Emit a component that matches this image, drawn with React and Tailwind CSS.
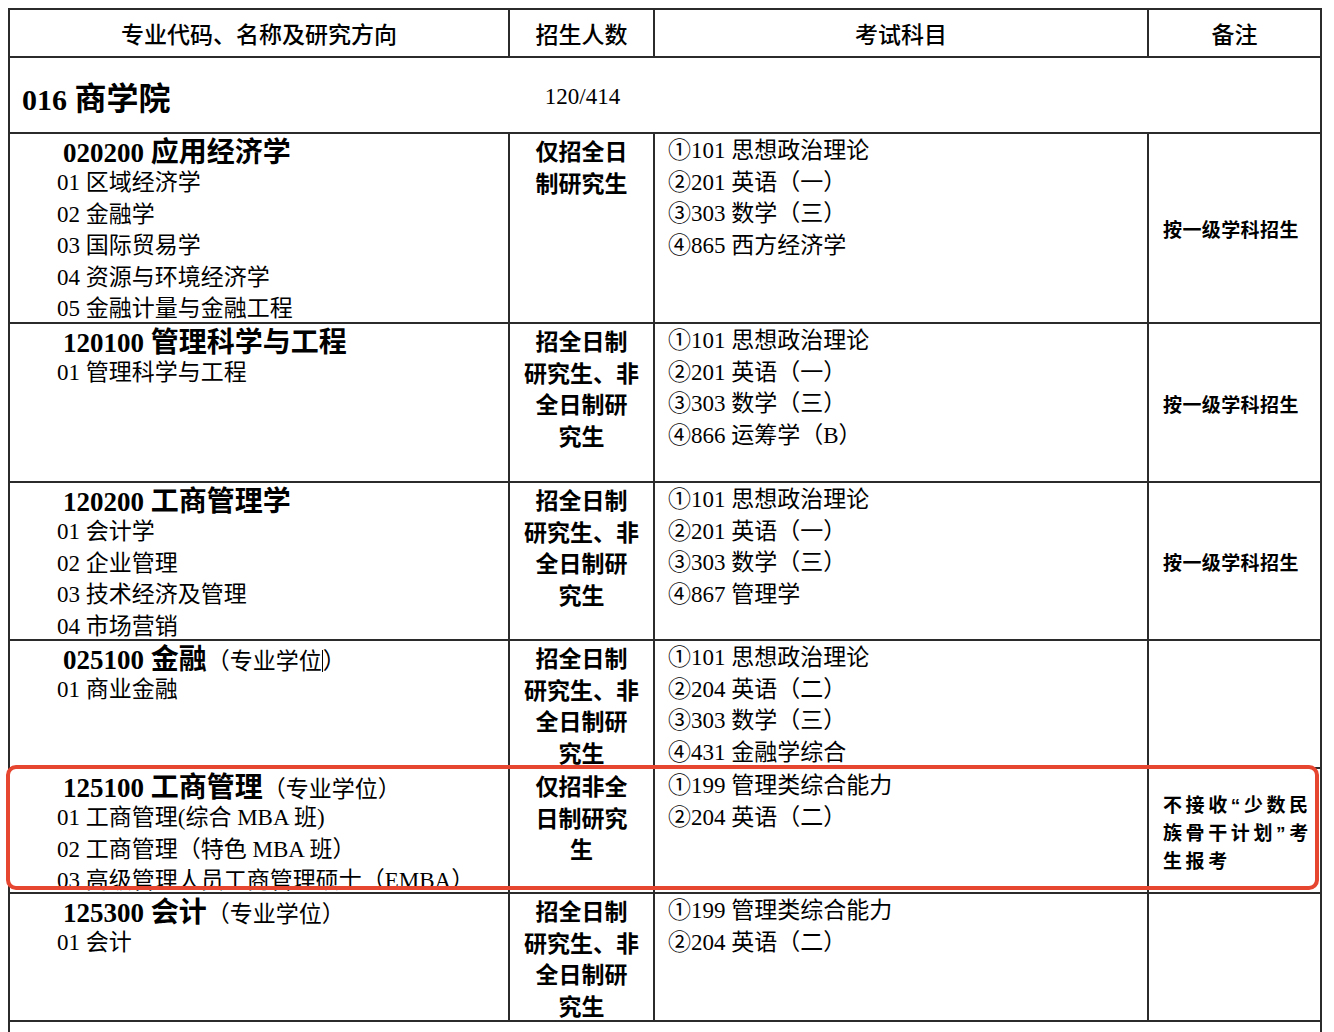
const serif = "font-['Liberation_Serif','Noto_Sans_CJK_SC',serif]";
const sans = "font-['Noto_Sans_CJK_SC','Liberation_Sans',sans-serif]";
const latin = "font-['Liberation_Sans',sans-serif]";

const fullPart = ["招全日制", "研究生、非", "全日制研", "究生"];

const rows = [
  {
    h: "h-[190px]",
    code: "020200",
    name: "应用经济学",
    items: ["01 区域经济学", "02 金融学", "03 国际贸易学", "04 资源与环境经济学", "05 金融计量与金融工程"],
    mode: ["仅招全日", "制研究生"],
    exams: ["①101 思想政治理论", "②201 英语（一）", "③303 数学（三）", "④865 西方经济学"],
    note: [["按一级学科招生"]],
  },
  {
    h: "h-[159px]",
    code: "120100",
    name: "管理科学与工程",
    items: ["01 管理科学与工程"],
    mode: fullPart,
    exams: ["①101 思想政治理论", "②201 英语（一）", "③303 数学（三）", "④866 运筹学（B）"],
    note: [["按一级学科招生"]],
  },
  {
    h: "h-[158px]",
    code: "120200",
    name: "工商管理学",
    items: ["01 会计学", "02 企业管理", "03 技术经济及管理", "04 市场营销"],
    mode: fullPart,
    exams: ["①101 思想政治理论", "②201 英语（一）", "③303 数学（三）", "④867 管理学"],
    note: [["按一级学科招生"]],
  },
  {
    h: "h-[128px]",
    code: "025100",
    name: "金融",
    suffix: "（专业学位",
    cursor: true,
    items: ["01 商业金融"],
    mode: fullPart,
    exams: ["①101 思想政治理论", "②204 英语（二）", "③303 数学（三）", "④431 金融学综合"],
  },
  {
    h: "h-[125px]",
    code: "125100",
    name: "工商管理",
    suffix: "（专业学位）",
    items: ["01 工商管理(综合 MBA 班)", "02 工商管理（特色 MBA 班）", "03 高级管理人员工商管理硕士（EMBA）"],
    mode: ["仅招非全", "日制研究", "生"],
    exams: ["①199 管理类综合能力", "②204 英语（二）"],
    note: [["不接收", "“", "少数民"], ["族骨干计划", "”", "考"], ["生报考"]],
    wide: true,
  },
  {
    h: "h-[128px]",
    code: "125300",
    name: "会计",
    suffix: "（专业学位）",
    items: ["01 会计"],
    mode: fullPart,
    exams: ["①199 管理类综合能力", "②204 英语（二）"],
  },
];

function Row({ r }) {
  return (
    <div className={`grid grid-cols-[500px_145px_494px_173px] border-b-2 border-[#2b2b2b] ${r.h}`}>
      <div className="border-r-2 border-[#2b2b2b] overflow-hidden pl-[47px] text-black">
        <div className="ml-[6px] h-[33px] leading-[33px] font-bold whitespace-nowrap overflow-visible">
          <span className={`${serif} text-[27px]`}>{r.code} </span>
          <span className={`${sans} text-[28px]`}>{r.name}</span>
          {r.suffix && (
            <span className={`${serif} font-normal text-[23px]`}>
              {r.suffix}
              {r.cursor && <span className="inline-block w-px h-[22px] bg-black align-[-3px]" />}
              {r.cursor && "）"}
            </span>
          )}
        </div>
        {r.items.map((t) => (
          <div key={t} className={`${serif} text-[23px] h-[31.5px] leading-[31.5px] whitespace-nowrap`}>
            {t}
          </div>
        ))}
      </div>
      <div className={`border-r-2 border-[#2b2b2b] overflow-hidden pt-[1px] text-center ${sans} font-bold text-[23px] leading-[31.5px]`}>
        {r.mode.map((t) => (
          <div key={t}>{t}</div>
        ))}
      </div>
      <div className={`border-r-2 border-[#2b2b2b] overflow-hidden pl-[13px] pt-[1px] ${serif} text-[23px] leading-[31.5px]`}>
        {r.exams.map((t) => (
          <div key={t} className="h-[31.5px]">{t}</div>
        ))}
      </div>
      <div className="border-r-2 border-[#2b2b2b] flex flex-col justify-center pl-[14px] pt-[2px]">
        {r.note &&
          r.note.map((parts) => (
            <div
              key={parts.join("")}
              className={`${sans} font-bold text-[19px] leading-[26px] whitespace-nowrap ${
                r.wide ? "tracking-[3.6px]" : "tracking-[0.4px]"
              }`}
            >
              {parts.map((p) =>
                p === "“" || p === "”" ? (
                  <span key={p} className={latin}>
                    {p}
                  </span>
                ) : (
                  <span key={p}>{p}</span>
                )
              )}
            </div>
          ))}
      </div>
    </div>
  );
}

export default function App() {
  return (
    <div className="relative bg-white min-h-[1032px] pt-[8px] pl-[8px] text-black">
      <div className="w-[1314px] border-l-2 border-t-2 border-[#2b2b2b]">
        <div className={`grid grid-cols-[500px_145px_494px_173px] h-[48px] border-b-2 border-[#2b2b2b] ${sans} font-medium text-[23px]`}>
          <div className="border-r-2 border-[#2b2b2b] flex items-center justify-center">专业代码、名称及研究方向</div>
          <div className="border-r-2 border-[#2b2b2b] flex items-center justify-center">招生人数</div>
          <div className="border-r-2 border-[#2b2b2b] flex items-center justify-center">考试科目</div>
          <div className="border-r-2 border-[#2b2b2b] flex items-center justify-center">备注</div>
        </div>

        <div className="grid grid-cols-[500px_145px_494px_173px] h-[76px] border-b-2 border-r-2 border-[#2b2b2b] items-center">
          <div className="pl-[12px] pt-[4px] font-bold whitespace-nowrap">
            <span className={`${serif} text-[30px]`}>016 </span>
            <span className={`${sans} text-[32px]`}>商学院</span>
          </div>
          <div className={`text-center pt-[4px] ${serif} text-[23px]`}>120/414</div>
          <div />
          <div />
        </div>

        {rows.map((r) => (
          <Row key={r.code} r={r} />
        ))}

        <div className="h-[40px] border-r-2 border-[#2b2b2b]" />
      </div>

      <div className="absolute left-[6px] top-[765px] w-[1313px] h-[125px] border-4 border-[#e6452f] rounded-[10px] pointer-events-none" />
    </div>
  );
}
